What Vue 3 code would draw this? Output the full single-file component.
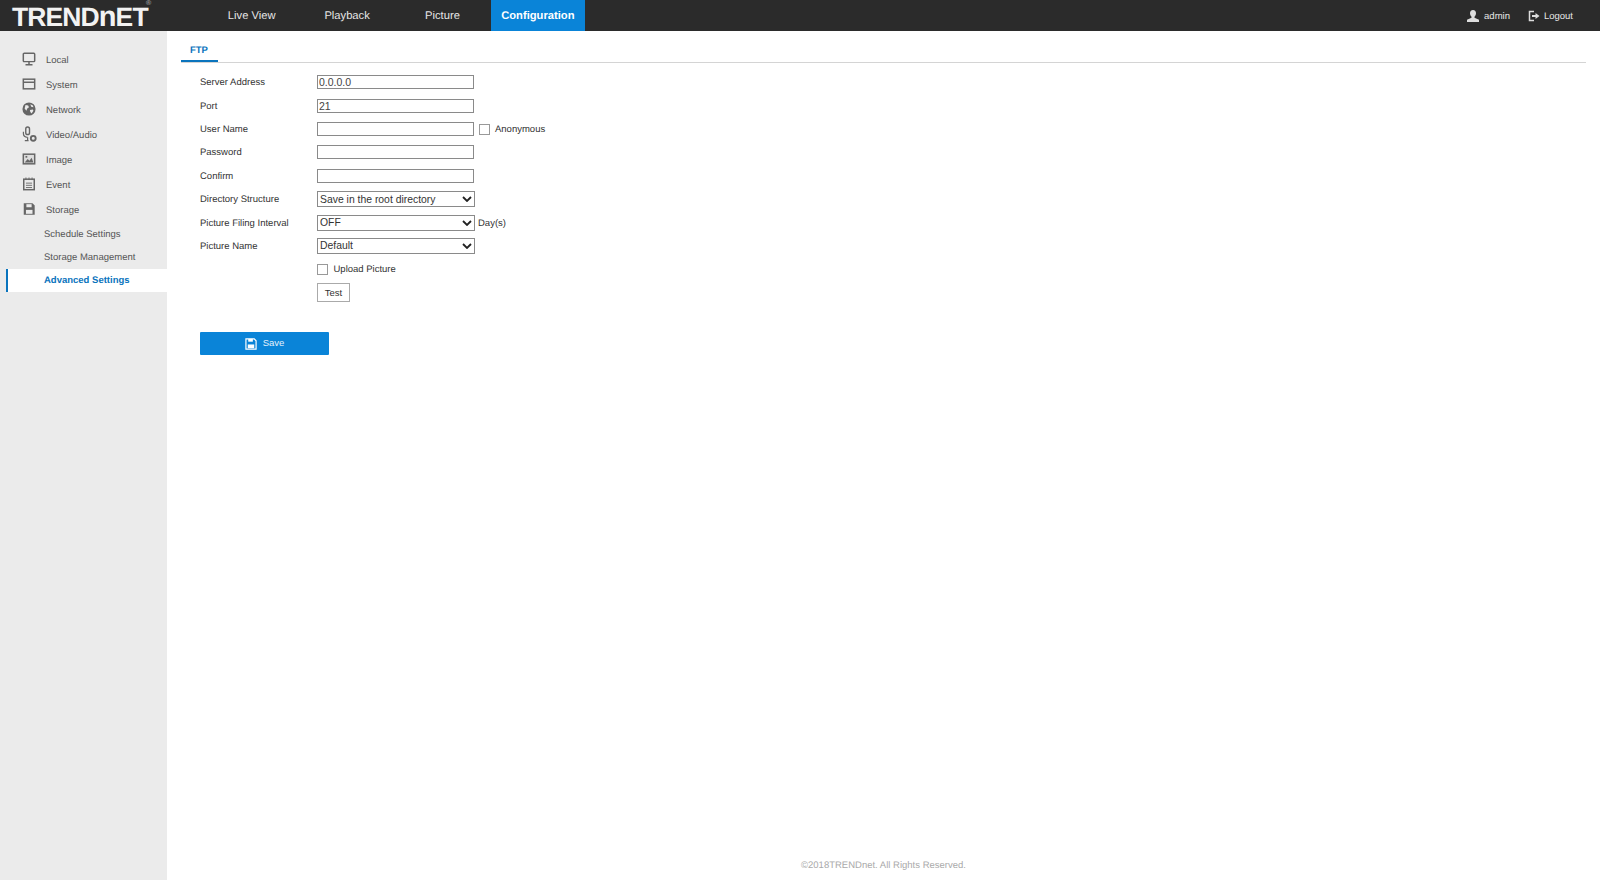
<script setup>
const navItems = ['Live View', 'Playback', 'Picture', 'Configuration']

const menu = [
  { name: 'Local', icon: 'local' },
  { name: 'System', icon: 'system' },
  { name: 'Network', icon: 'network' },
  { name: 'Video/Audio', icon: 'video' },
  { name: 'Image', icon: 'image' },
  { name: 'Event', icon: 'event' },
  { name: 'Storage', icon: 'storage' }
]

const subMenu = ['Schedule Settings', 'Storage Management', 'Advanced Settings']
</script>

<template>
  <div class="page">
    <header class="topbar">
      <div class="logo-wrap">
        <span class="logo">TREND<span class="logo-n">n</span>ET</span>
        <span class="reg">®</span>
      </div>
      <nav class="nav">
        <a
          v-for="item in navItems"
          :key="item"
          class="nav-item"
          :class="{ active: item === 'Configuration' }"
        >{{ item }}</a>
      </nav>
      <div class="user">
        <span class="user-item">
          <svg width="14" height="14" viewBox="0 0 14 14">
            <path d="M7 1c2 0 3 1.400 3 3.200 0 1.500-.7 2.800-1.500 3.500v1.100L13 10.800V13H1v-2.200l4.500-2V7.700C4.700 7 4 5.700 4 4.200 4 2.400 5 1 7 1z" fill="#ddd" />
          </svg>
          <span class="user-text">admin</span>
        </span>
        <span class="user-item logout">
          <svg width="14" height="14" viewBox="0 0 14 14" fill="none" stroke="#ddd">
            <path d="M7 2.500H2.500v9H7" stroke-width="1.500" />
            <path d="M5 7h4" stroke-width="2" />
            <path d="M8.500 4l4 3-4 3z" fill="#ddd" stroke="none" />
          </svg>
          <span class="user-text">Logout</span>
        </span>
      </div>
    </header>

    <div class="body">
      <aside class="sidebar">
        <div v-for="item in menu" :key="item.name" class="menu-item">
          <span class="menu-icon">
            <svg v-if="item.icon === 'local'" width="14" height="14" viewBox="0 0 16 16" fill="none" stroke="#666">
              <rect x="1.500" y="1.500" width="13" height="9.500" rx="1" stroke-width="1.700" />
              <path d="M8 11v3M4 14.500h8" stroke-width="1.700" />
            </svg>
            <svg v-else-if="item.icon === 'system'" width="14" height="14" viewBox="0 0 16 16" fill="none" stroke="#666">
              <rect x="1.500" y="2.500" width="13" height="11" stroke-width="1.700" />
              <path d="M1.500 6h13" stroke-width="1.700" />
            </svg>
            <svg v-else-if="item.icon === 'network'" width="14" height="14" viewBox="0 0 16 16">
              <circle cx="8" cy="8" r="7.500" fill="#666" />
              <path d="M4 3.500l3 .5 1 2-2 1.500-1 2.500-2-2.500zM9 9l3.500-.5.500 1.500-2 3-1.500-1.500zM9.500 2.500l3 1.500.5 2-2.500-.5z" fill="#ebebeb" />
            </svg>
            <svg v-else-if="item.icon === 'video'" width="15" height="17" viewBox="0 0 16 18" fill="none" stroke="#666">
              <rect x="4" y="1" width="4" height="8" rx="2" stroke-width="1.500" />
              <path d="M1.500 6v2c0 2.500 2 4 4.500 4M6 12v3M3 15.500h4" stroke-width="1.300" />
              <circle cx="12" cy="13" r="2.600" stroke-width="2" />
            </svg>
            <svg v-else-if="item.icon === 'image'" width="14" height="14" viewBox="0 0 16 16">
              <rect x="1.500" y="2.500" width="13" height="11" fill="#ddd" stroke="#666" stroke-width="1.700" />
              <path d="M3 12l3.500-4 2 2 2.500-3.500L13 12z" fill="#666" />
              <rect x="4" y="4.500" width="2" height="2" fill="#666" />
            </svg>
            <svg v-else-if="item.icon === 'event'" width="14" height="14" viewBox="0 0 16 16" fill="none" stroke="#666">
              <rect x="2" y="2.500" width="12" height="12" stroke-width="1.700" />
              <path d="M4.500 0.500v3M8 0.500v3M11.500 0.500v3M4.500 7h7M4.500 9.500h7M4.500 12h7" />
            </svg>
            <svg v-else width="14" height="14" viewBox="0 0 16 16">
              <path d="M2 1.500h10l2.500 2.500v10.500H2z" fill="#666" />
              <rect x="5" y="2.500" width="6" height="3.500" fill="#ebebeb" />
              <rect x="4.500" y="9" width="7.500" height="4.500" fill="#ebebeb" />
            </svg>
          </span>
          {{ item.name }}
        </div>
        <div class="sub-list">
          <div
            v-for="sub in subMenu"
            :key="sub"
            class="sub-item"
            :class="{ current: sub === 'Advanced Settings' }"
          >{{ sub }}</div>
        </div>
      </aside>

      <main class="main">
        <div class="tabs">
          <span class="tab">FTP</span>
        </div>

        <form class="form" @submit.prevent>
          <div class="row">
            <label>Server Address</label>
            <input type="text" value="0.0.0.0" />
          </div>
          <div class="row">
            <label>Port</label>
            <input type="text" value="21" />
          </div>
          <div class="row">
            <label>User Name</label>
            <input type="text" />
            <span class="check anon"><i class="box"></i>Anonymous</span>
          </div>
          <div class="row">
            <label>Password</label>
            <input type="password" />
          </div>
          <div class="row">
            <label>Confirm</label>
            <input type="password" />
          </div>
          <div class="row">
            <label>Directory Structure</label>
            <select><option>Save in the root directory</option></select>
          </div>
          <div class="row">
            <label>Picture Filing Interval</label>
            <select><option>OFF</option></select>
            <span class="unit">Day(s)</span>
          </div>
          <div class="row">
            <label>Picture Name</label>
            <select><option>Default</option></select>
          </div>
          <div class="row">
            <label></label>
            <span class="check"><i class="box"></i>Upload Picture</span>
          </div>
          <div class="row">
            <label></label>
            <button type="button" class="test">Test</button>
          </div>
          <button type="button" class="save">
            <svg width="12" height="12" viewBox="0 0 13 13">
              <path d="M1 1h9l2 2v9H1z" fill="none" stroke="#fff" stroke-width="1.300" />
              <rect x="3.500" y="1" width="5" height="3" fill="#fff" />
              <rect x="3" y="7" width="7" height="4" fill="#fff" />
            </svg>
            <span class="save-text">Save</span>
          </button>
        </form>

        <footer class="footer">©2018TRENDnet. All Rights Reserved.</footer>
      </main>
    </div>
  </div>
</template>

<style scoped>
.page {
  height: 880px;
  overflow: hidden;
  display: flex;
  flex-direction: column;
  font-family: "Liberation Sans", Arial, sans-serif;
  font-size: 9.500px;
  text-rendering: geometricPrecision;
  color: #333;
}

.topbar {
  height: 31px;
  background: #2b2b2b;
  display: flex;
  align-items: center;
  color: #e6e6e6;
}

.logo-wrap {
  width: 205px;
  height: 31px;
  padding: 7px 0 0 12px;
  box-sizing: border-box;
  position: relative;
  flex-shrink: 0;
}

.logo {
  display: inline-flex;
  align-items: baseline;
  font-size: 26.500px;
  font-weight: 700;
  line-height: 20px;
  letter-spacing: -0.900px;
  color: #f2f2f2;
}

.logo-n {
  font-size: 29px;
}

.reg {
  position: absolute;
  left: 146px;
  top: 0;
  font-size: 7px;
  line-height: 8px;
  color: #bbb;
}

.nav {
  display: flex;
  gap: 2px;
  height: 100%;
}

.nav-item {
  width: 93.400px;
  display: flex;
  align-items: center;
  justify-content: center;
  padding-top: 1px;
  box-sizing: border-box;
  font-size: 11.200px;
}

.nav-item.active {
  background: #0a84d8;
  color: #fff;
  font-weight: 700;
}

.user {
  margin-left: auto;
  display: flex;
  gap: 17px;
  padding-right: 27px;
}

.user-item {
  display: flex;
  align-items: center;
  gap: 4px;
}

.logout {
  gap: 3px;
}

.user-text {
  padding-top: 1px;
}

.body {
  flex: 1;
  display: flex;
  min-height: 0;
}

.sidebar {
  width: 167px;
  background: #ebebeb;
  padding-top: 16.500px;
  box-sizing: border-box;
  color: #555;
}

.menu-item {
  height: 25px;
  display: flex;
  align-items: center;
  padding-left: 22px;
}

.menu-icon {
  width: 24px;
  margin-top: -2px;
  display: flex;
  align-items: center;
}

.sub-list {
  margin-top: 0.500px;
}

.sub-item {
  height: 23px;
  line-height: 24px;
  padding-left: 44px;
}

.sub-item.current {
  margin-left: 6px;
  padding-left: 36px;
  border-left: 2px solid #0a74bd;
  background: #fff;
  color: #0a74bd;
  font-weight: 700;
}

.main {
  flex: 1;
  display: flex;
  flex-direction: column;
  padding: 0 14px;
  min-width: 0;
}

.tabs {
  height: 32px;
  box-sizing: border-box;
  border-bottom: 1px solid #d4d4d4;
  flex-shrink: 0;
}

.tab {
  display: inline-block;
  height: 31px;
  box-sizing: border-box;
  padding: 14px 10px 0 9px;
  border-bottom: 2px solid #0a74bd;
  color: #0a74bd;
  font-weight: 700;
}

.form {
  padding: 7.500px 0 0 19px;
}

.row {
  height: 23.400px;
  display: flex;
  align-items: center;
}

.row label {
  width: 117px;
  flex-shrink: 0;
  padding-top: 1px;
}

.row input[type="text"],
.row input[type="password"] {
  width: 157px;
  height: 14px;
  box-sizing: border-box;
  padding: 0 1px;
  border: 1px solid #8a8a8a;
  font-family: inherit;
  font-size: 10.500px;
  color: #444;
  outline: none;
}

.row select {
  width: 158px;
  height: 16px;
  box-sizing: border-box;
  padding: 0 0 0 2px;
  appearance: none;
  border: 1px solid #8a8a8a;
  border-radius: 0;
  background: #fff url("data:image/svg+xml,%3Csvg xmlns='http://www.w3.org/2000/svg' width='10' height='6'%3E%3Cpath d='M1 1l4 4 4-4' fill='none' stroke='%23222' stroke-width='1.800'/%3E%3C/svg%3E") no-repeat right 2px center;
  font-family: inherit;
  font-size: 10.400px;
  color: #333;
}

.check {
  display: flex;
  align-items: center;
  gap: 5.500px;
  padding-top: 1px;
}

.anon {
  margin-left: 4.500px;
}

.box {
  width: 9px;
  height: 9px;
  border: 1px solid #999;
  background: #fff;
}

.unit {
  margin-left: 3px;
  padding-top: 1px;
}

.test {
  width: 33px;
  height: 19px;
  padding: 0;
  border: 1px solid #aaa;
  background: #fff;
  font-family: inherit;
  font-size: 9.500px;
  color: #333;
}

.save {
  margin-top: 28px;
  width: 129px;
  height: 23px;
  display: flex;
  align-items: center;
  justify-content: center;
  gap: 6px;
  border: none;
  border-radius: 1px;
  background: #0a84d8;
  color: #e4f1fb;
  font-family: inherit;
  font-size: 9.500px;
}

.save-text {
  padding-bottom: 2px;
}

.footer {
  margin-top: auto;
  padding-bottom: 9px;
  text-align: center;
  color: #aaa;
}
</style>
